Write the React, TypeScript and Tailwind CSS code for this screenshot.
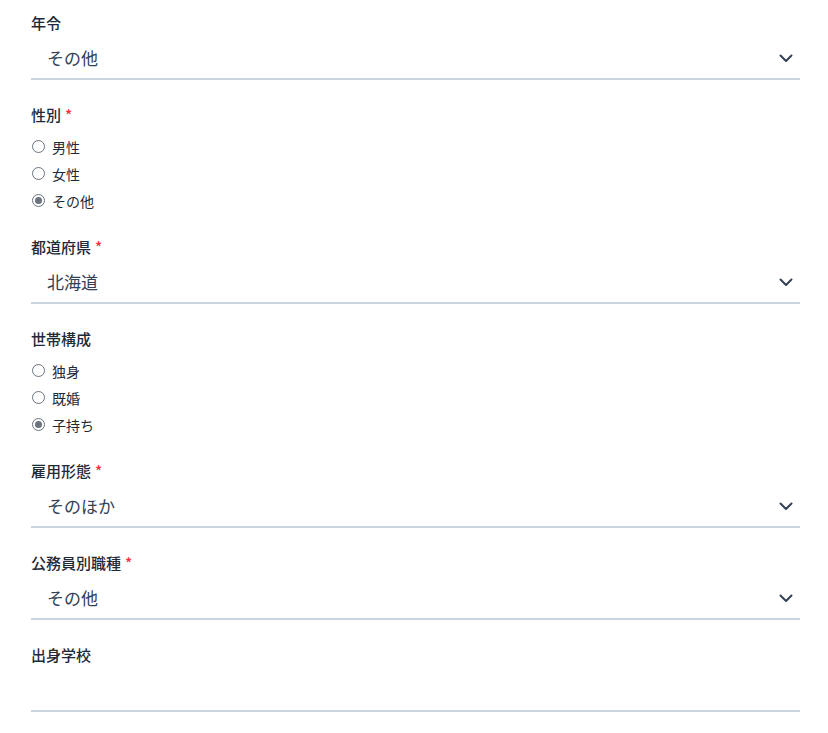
import React from 'react';

const font = { fontFamily: '"Noto Sans CJK JP", "Noto Sans", sans-serif' };

function Label({ text, required = false }: { text: string; required?: boolean }) {
  return (
    <div className="text-[15px] leading-5 font-medium text-[#1f2937]">
      {text}
      {required && <span className="ml-1 text-red-500">*</span>}
    </div>
  );
}

function Select({ label, value, required = false }: { label: string; value: string; required?: boolean }) {
  return (
    <div className="mb-[25px]">
      <Label text={label} required={required} />
      <div className="mt-1 h-[43px] flex items-center justify-between border-b-2 border-[#cbd5e1] pl-4 pr-1">
        <span className="text-[17px] text-[#334155]">{value}</span>
        <svg width="16" height="16" viewBox="0 0 16 16" fill="none" className="mr-0.5">
          <path d="M2.5 5.5 L8 11 L13.5 5.5" stroke="#334155" strokeWidth="2" strokeLinecap="round" strokeLinejoin="round" />
        </svg>
      </div>
    </div>
  );
}

function RadioGroup({ label, options, selected, required = false }: { label: string; options: string[]; selected: string; required?: boolean }) {
  return (
    <div className="mb-[23px]">
      <Label text={label} required={required} />
      <div className="mt-2 flex flex-col">
        {options.map((o) => (
          <label key={o} className="h-[27px] flex items-center gap-[7px]">
            <span className="w-[13px] h-[13px] rounded-full border border-[#6b7280] flex items-center justify-center ml-px">
              {o === selected && <span className="w-[7px] h-[7px] rounded-full bg-[#6b7280]" />}
            </span>
            <span className="text-sm text-[#1f2937]">{o}</span>
          </label>
        ))}
      </div>
    </div>
  );
}

export default function App() {
  return (
    <div className="bg-white min-h-[733px] pt-[13px] pl-[31px] pr-[28px]" style={font}>
      <Select label="年令" value="その他" />
      <RadioGroup label="性別" options={['男性', '女性', 'その他']} selected="その他" required />
      <Select label="都道府県" value="北海道" required />
      <RadioGroup label="世帯構成" options={['独身', '既婚', '子持ち']} selected="子持ち" />
      <Select label="雇用形態" value="そのほか" required />
      <Select label="公務員別職種" value="その他" required />
      <div>
        <Label text="出身学校" />
        <div className="mt-1 h-[43px] border-b-2 border-[#cbd5e1]" />
      </div>
    </div>
  );
}
